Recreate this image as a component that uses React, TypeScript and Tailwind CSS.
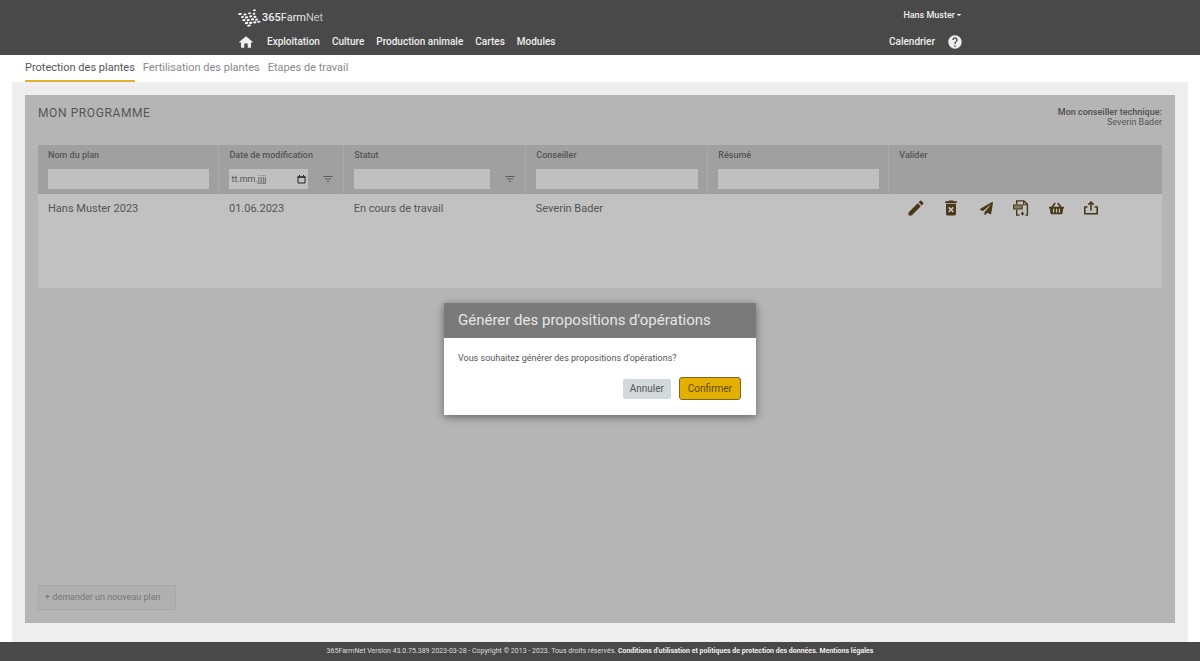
import { FaPaperPlane, FaShoppingBasket } from "react-icons/fa";
import { MdDeleteForever, MdFilterList, MdHelp, MdModeEdit } from "react-icons/md";

const mainNav = ["Exploitation", "Culture", "Production animale", "Cartes", "Modules"];
const tabs = ["Protection des plantes", "Fertilisation des plantes", "Etapes de travail"];

const logoDots: [number, number, number, number][] = [
  [2, 5, 2, 0.9], [7, 5.5, 1.7, 0.9], [11.5, 4.3, 1.5, 0.9], [16.5, 1.3, 1.6, 0.8], [16, 4.8, 1.4, 0.9],
  [4.5, 8, 1.5, 1.1], [8.5, 8.3, 1.7, 1.1], [12.8, 7.3, 1.6, 1.1], [17, 7.8, 1.5, 1.1],
  [6, 11.1, 1.7, 1.1], [10.3, 11.2, 1.6, 1.1], [14.5, 10.4, 1.6, 1.2], [18.6, 10.7, 1.5, 1.1],
  [8.5, 14, 1.8, 1.1], [12.7, 13.8, 1.7, 1.1], [16.8, 13.3, 1.6, 1.1], [20.8, 12.8, 1.7, 0.9],
  [11, 16.6, 1.9, 1],
];

function Logo() {
  return (
    <a href="#" aria-label="365FarmNet" className="ml-px flex items-center gap-px text-[11px] leading-4 text-[#eee]">
      <svg viewBox="0 0 23 18" className="h-[18px] w-[23px]" fill="#fff" aria-hidden="true">
        {logoDots.map(([x, y, rx, ry]) => (
          <ellipse key={`${x}-${y}`} cx={x} cy={y} rx={rx} ry={ry} transform={`rotate(-8 ${x} ${y})`} />
        ))}
      </svg>
      <span>
        <span className="font-medium">365</span>Farm<span className="font-light">Net</span>
      </span>
    </a>
  );
}

function HomeIcon() {
  return (
    <svg viewBox="0 0 14 12" className="h-3 w-[14px]" fill="currentColor" aria-hidden="true">
      <path d="M7 .2 13.6 5.8c.4.4.2.8-.3.8H12v4.6c0 .4-.3.6-.6.6H8.7V7.6H5.3v4.2H2.6c-.3 0-.6-.2-.6-.6V6.6H.7c-.5 0-.7-.4-.3-.8z" />
    </svg>
  );
}

function PdfIcon() {
  return (
    <svg viewBox="0 0 16 16" className="size-4" fill="none" stroke="currentColor" strokeWidth="1.4" aria-hidden="true">
      <path d="M3.7 4.2V.9h7.2l3.5 3.5v10.7h-2M3.7 9.8v5.3h3" />
      <path d="M10.6.9v3.9h3.8" strokeWidth="1.1" />
      <path d="M9.5 11.5v2.5M8 13l1.5 1.8L11 13" strokeWidth="1.1" />
      <rect x="0.6" y="5" width="8.6" height="4" fill="currentColor" fillOpacity="0.55" strokeWidth="1" />
      <path d="M2.3 7h1.4M4.5 7h1.2M6.4 7h1.3" stroke="#a69c8a" strokeWidth="0.8" />
    </svg>
  );
}

function ShareIcon() {
  return (
    <svg viewBox="0 0 16 16" className="size-4" fill="none" stroke="currentColor" strokeWidth="1.6" aria-hidden="true">
      <path d="M4.5 7H1.8v6.8h12.4V7h-2.7M8 10.5V2.5M5.3 4.8 8 2.1l2.7 2.7" />
    </svg>
  );
}

function CalendarIcon() {
  return (
    <svg viewBox="0 0 9 9" className="size-[9px]" fill="none" stroke="#222" aria-hidden="true">
      <path d="M1 2v6h7V2" />
      <path d="M.5 2h8" strokeWidth="1.6" />
      <path d="M2.5 0v1.5M6.5 0v1.5" />
    </svg>
  );
}

type Column = { label: string; width: string; kind: "text" | "date" | "none"; filter?: boolean };

const columns: Column[] = [
  { label: "Nom du plan", width: "w-[16.1%]", kind: "text" },
  { label: "Date de modification", width: "w-[11.1%]", kind: "date", filter: true },
  { label: "Statut", width: "w-[16.2%]", kind: "text", filter: true },
  { label: "Conseiller", width: "w-[16.2%]", kind: "text" },
  { label: "Résumé", width: "w-[16.1%]", kind: "text" },
  { label: "Valider", width: "w-auto", kind: "none" },
];

function HeaderCell({ column, index }: { column: Column; index: number }) {
  const id = `filter-${index}`;
  const divider = index < columns.length - 1 ? "border-r border-[#aaa]" : "";
  return (
    <th scope="col" className={`h-[49px] pt-1 pr-[9px] pl-[10px] text-left align-top font-medium ${divider}`}>
      {column.kind === "none" ? (
        <span className="block text-[9px] leading-3">{column.label}</span>
      ) : (
        <label htmlFor={id} className="block text-[9px] leading-3 whitespace-nowrap">{column.label}</label>
      )}
      {column.kind !== "none" && (
        <div className="mt-2 flex h-5 items-center">
          <div className="flex h-full min-w-0 flex-1 items-center bg-[#c0c0c0]">
            <input
              id={id}
              type="text"
              placeholder={column.kind === "date" ? "tt.mm.jjjj" : undefined}
              className="h-full w-full min-w-0 bg-transparent px-0.5 text-[9px] font-normal text-[#555] outline-none placeholder:text-[#555]"
            />
            {column.kind === "date" && (
              <button type="button" aria-label="Choisir une date" className="mr-0.5 shrink-0">
                <CalendarIcon />
              </button>
            )}
          </div>
          {column.filter && (
            <button type="button" aria-label={`Filtrer ${column.label}`} className="ml-[14px] shrink-0 text-[#5c5c5c]">
              <MdFilterList className="size-3" />
            </button>
          )}
        </div>
      )}
    </th>
  );
}

const actions = [
  { label: "Modifier", icon: <MdModeEdit className="size-5" /> },
  { label: "Supprimer", icon: <MdDeleteForever className="size-5" /> },
  { label: "Envoyer", icon: <FaPaperPlane className="size-[13px]" /> },
  { label: "Télécharger le PDF", icon: <PdfIcon /> },
  { label: "Panier", icon: <FaShoppingBasket className="size-[15px]" /> },
  { label: "Partager", icon: <ShareIcon /> },
];

export default function App() {
  return (
    <div className="flex min-h-screen flex-col bg-white font-['Roboto',sans-serif] text-[#555]">
      <header className="bg-[#494949] text-[#eee]">
        <div className="mx-auto flex h-[55px] w-full max-w-[726px] flex-col">
          <div className="flex h-7 items-center justify-between pt-2">
            <Logo />
            <button type="button" className="flex items-center gap-0.5 pr-0.5 pb-1.5 text-[9px] leading-3 font-medium">
              Hans Muster
              <svg viewBox="0 0 4 2" className="h-0.5 w-1" fill="currentColor" aria-hidden="true"><path d="M0 0h4v.5L2 2 0 .5z" /></svg>
            </button>
          </div>
          <div className="flex h-[27px] items-center justify-between text-[10px] font-medium">
            <nav className="flex items-center gap-3">
              <a href="#" aria-label="Accueil" className="mr-0.5 ml-0.5"><HomeIcon /></a>
              {mainNav.map((item) => <a key={item} href="#">{item}</a>)}
            </nav>
            <div className="flex items-center gap-3">
              <a href="#">Calendrier</a>
              <a href="#" aria-label="Aide"><MdHelp className="size-4" /></a>
            </div>
          </div>
        </div>
      </header>

      <nav className="flex h-[27px] gap-2 px-[25px] text-[11px] leading-[25px] text-[#888]">
        {tabs.map((tab, i) => (
          <a key={tab} href="#" className={i === 0 ? "border-b-2 border-[#dfb32f] text-[#555]" : ""}>{tab}</a>
        ))}
      </nav>

      <main className="mx-3 flex flex-1 flex-col bg-[#eee] px-[13px] pt-[13px] pb-[19px]">
        <section className="relative flex flex-1 flex-col bg-[#b5b5b5] px-[13px] pt-3 pb-[13px]">
          <div className="flex h-[38px] items-start justify-between">
            <h1 className="text-[12px] leading-3 tracking-wider">MON PROGRAMME</h1>
            <p className="text-right text-[9px] leading-[10px]">
              <b className="block font-semibold">Mon conseiller technique:</b>
              Severin Bader
            </p>
          </div>
          <table className="w-full table-fixed border-collapse bg-[#c1c1c1]">
            <colgroup>
              {columns.map((c) => <col key={c.label} className={c.width} />)}
            </colgroup>
            <thead className="bg-[#a0a0a0]">
              <tr>{columns.map((c, i) => <HeaderCell key={c.label} column={c} index={i} />)}</tr>
            </thead>
            <tbody>
              <tr className="h-[94px] align-top text-[11px] leading-[30px]">
                <td className="px-[10px]">Hans Muster 2023</td>
                <td className="px-[10px]">01.06.2023</td>
                <td className="px-[10px]">En cours de travail</td>
                <td className="px-[10px]">Severin Bader</td>
                <td />
                <td className="px-[10px]">
                  <div className="flex h-7 items-center text-[#493817]">
                    {actions.map((a) => (
                      <button key={a.label} type="button" aria-label={a.label} className="grid w-[35px] place-items-center">
                        {a.icon}
                      </button>
                    ))}
                  </div>
                </td>
              </tr>
            </tbody>
          </table>
          <button type="button" className="mt-auto h-[25px] w-[138px] border border-[#a8a8a8] bg-[#b0b0b0] px-1.5 text-left text-[9px] text-[#777]">
            + demander un nouveau plan
          </button>

          <div className="absolute inset-0 grid place-items-center">
            <div role="dialog" aria-modal="true" aria-labelledby="dialog-title" className="w-[312px] bg-white shadow-[0_2px_8px_rgba(0,0,0,0.45)]">
              <h2 id="dialog-title" className="bg-[#7a7a7a] px-[14px] text-[15px] leading-[35px] text-[#e6e6e6]">
                Générer des propositions d'opérations
              </h2>
              <div className="pt-[14px] pr-[15px] pb-[15px] pl-[14px]">
                <p className="text-[9px] leading-3">Vous souhaitez générer des propositions d'opérations?</p>
                <div className="mt-[13px] flex items-center justify-end gap-2 text-[10px]">
                  <button type="button" className="h-5 rounded-xs bg-[#d2d9db] px-[7px]">Annuler</button>
                  <button type="button" className="h-[23px] rounded-[3px] border border-[#80671a] bg-[#e3b000] px-2 text-[#5e4a10]">Confirmer</button>
                </div>
              </div>
            </div>
          </div>
        </section>
      </main>

      <footer className="bg-[#494949] text-center text-[7px] leading-[19px] text-[#ddd]">
        365FarmNet Version 43.0.75.389 2023-03-28 - Copyright © 2013 - 2023. Tous droits réservés.{" "}
        <a href="#" className="font-bold text-[#eee]">Conditions d'utilisation et politiques de protection des données.</a>{" "}
        <a href="#" className="font-bold text-[#eee]">Mentions légales</a>
      </footer>
    </div>
  );
}
